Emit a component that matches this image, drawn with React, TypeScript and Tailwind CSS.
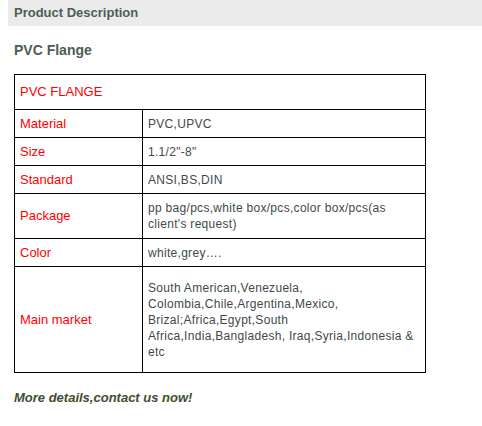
const rows: { label: string; value: React.ReactNode; h: string }[] = [
  { label: "Material", value: "PVC,UPVC", h: "h-[28px]" },
  { label: "Size", value: '1.1/2"-8"', h: "h-[28px]" },
  { label: "Standard", value: "ANSI,BS,DIN", h: "h-[28px]" },
  {
    label: "Package",
    value: (
      <>
        pp bag/pcs,white box/pcs,color box/pcs(as
        <br />
        client's request)
      </>
    ),
    h: "h-[45px]",
  },
  { label: "Color", value: "white,grey….", h: "h-[28px]" },
  {
    label: "Main market",
    value: (
      <>
        South American,Venezuela,
        <br />
        Colombia,Chile,Argentina,Mexico,
        <br />
        Brizal;Africa,Egypt,South
        <br />
        Africa,India,Bangladesh, Iraq,Syria,Indonesia &amp;
        <br />
        etc
      </>
    ),
    h: "h-[106px]",
  },
];

export default function App() {
  return (
    <div className="w-[482px] h-[426px] bg-white font-['Liberation_Sans',Arial,sans-serif]">
      <div className="ml-[8px] h-[26px] bg-[#ebebeb] pl-[6px] flex items-center">
        <h2 className="text-[13px] font-bold text-[#4d5d55]">Product Description</h2>
      </div>
      <div className="px-[14px]">
        <h3 className="mt-[16px] text-[14px] font-bold leading-[16px] text-[#4d5d55]">PVC Flange</h3>
        <table className="mt-[16px] w-[412px] table-fixed border-collapse border border-black leading-[16px]">
          <colgroup>
            <col className="w-[128px]" />
            <col />
          </colgroup>
          <tbody>
            <tr className="h-[35px]">
              <td colSpan={2} className="border border-black px-[5px] text-[13px] text-[#ff0000]">
                PVC FLANGE
              </td>
            </tr>
            {rows.map((r) => (
              <tr key={r.label} className={r.h}>
                <td className="border border-black px-[5px] text-[13px] text-[#ff0000]">{r.label}</td>
                <td className="border border-black px-[5px] text-[12px] tracking-[0.3px] text-[#3f4a47]">
                  {r.value}
                </td>
              </tr>
            ))}
          </tbody>
        </table>
        <p className="mt-[15px] text-[13px] font-bold italic text-[#3f4e2e]">More details,contact us now!</p>
      </div>
    </div>
  );
}
